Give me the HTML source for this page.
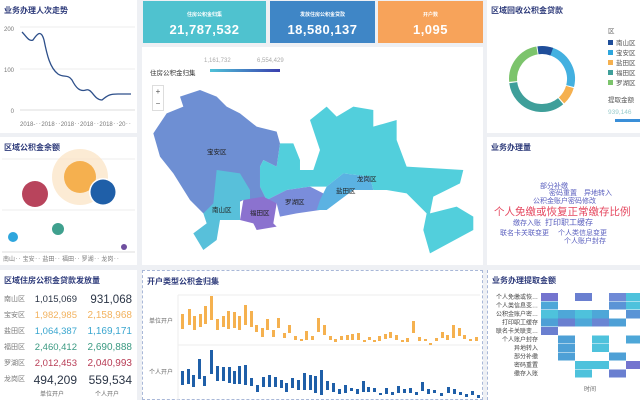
<!DOCTYPE html>
<html><head><meta charset="utf-8"><style>
*{margin:0;padding:0;box-sizing:border-box}
body{width:640px;height:400px;overflow:hidden;background:#eef0f4;font-family:"Liberation Sans","Noto Sans CJK SC",sans-serif;position:relative}
.p{position:absolute;background:#fff}
.t{position:absolute;left:4px;top:5px;font-size:8px;font-weight:bold;color:#2d3a7a}
.k{position:absolute;color:#fff;text-align:center}
.k .a{font-size:5px;margin-top:10px;font-weight:bold}
.k .b{font-size:13px;font-weight:bold;letter-spacing:.5px;margin-top:4px}
.s{position:absolute;font-size:6px;color:#666}
</style></head><body>
<div class="p" style="left:0;top:0;width:137px;height:133px"><div class="t">业务办理人次走势</div>
<svg width="137" height="133" style="position:absolute;left:0;top:0">
<line x1="20" y1="27" x2="135" y2="27" stroke="#eee"/><line x1="20" y1="69" x2="135" y2="69" stroke="#eee"/><line x1="20" y1="110" x2="135" y2="110" stroke="#ddd"/>
<text x="14" y="31" font-size="6" fill="#777" text-anchor="end">200</text><text x="14" y="72" font-size="6" fill="#777" text-anchor="end">100</text><text x="14" y="113" font-size="6" fill="#777" text-anchor="end">0</text>
<path d="M22 32 C26 36,29 42,33 40 C37 34,41 29,44 40 C47 55,50 68,58 74 C64 78,68 74,72 80 C76 88,80 92,86 90 C92 88,94 100,102 100 C108 95,110 94,118 94 L131 94" fill="none" stroke="#2d4f8a" stroke-width="1.3"/>
<text x="20" y="126" font-size="6" fill="#777">2018-‥2018‥2018‥2018‥2018‥20‥</text></svg></div>
<div class="p" style="left:0;top:137px;width:137px;height:128px"><div class="t">区域公积金余额</div>
<svg width="137" height="128" style="position:absolute;left:0;top:0">
<line x1="2" y1="22" x2="135" y2="22" stroke="#eee"/><line x1="2" y1="73" x2="135" y2="73" stroke="#eee"/><line x1="2" y1="115" x2="135" y2="115" stroke="#ddd"/>
<circle cx="80" cy="40" r="28" fill="#fbe3c2" opacity=".7"/><circle cx="80" cy="40" r="16" fill="#f5b04f"/>
<circle cx="35" cy="57" r="13" fill="#b8445c"/><circle cx="103" cy="55" r="14" fill="#fff"/><circle cx="103" cy="55" r="12.5" fill="#1f5fa8"/>
<circle cx="13" cy="100" r="5" fill="#2ea6dd"/><circle cx="58" cy="92" r="6" fill="#3fa08e"/><circle cx="124" cy="110" r="3" fill="#6f4f9f"/>
<text x="3" y="124" font-size="6" fill="#777">南山‥ 宝安‥ 盐田‥ 福田‥ 罗湖‥ 龙岗‥</text></svg></div>
<div class="p" style="left:0;top:270px;width:137px;height:130px"><div class="t">区域住房公积金贷款发放量</div>
<div style="position:absolute;left:4px;top:22px;font-size:7px;line-height:16px;color:#777">南山区<br>宝安区<br>盐田区<br>福田区<br>罗湖区<br>龙岗区</div>
<div style="position:absolute;right:60px;top:22px;text-align:right;line-height:16px;font-size:9.5px"><div style="color:#2b3546">1,015,069</div><div style="color:#f2b25e">1,982,985</div><div style="color:#3aa6cf">1,064,387</div><div style="color:#3b9a82">2,460,412</div><div style="color:#b83d56">2,012,453</div><div style="color:#2b3546;font-size:12px">494,209</div></div>
<div style="position:absolute;right:5px;top:22px;text-align:right;line-height:16px;font-size:10px"><div style="color:#2b3546;font-size:11.5px">931,068</div><div style="color:#f2b25e">2,158,968</div><div style="color:#3aa6cf">1,169,171</div><div style="color:#3b9a82">2,690,888</div><div style="color:#b83d56">2,040,993</div><div style="color:#2b3546;font-size:12px">559,534</div></div>
<div class="s" style="left:40px;top:119px">单位开户</div><div class="s" style="left:95px;top:119px">个人开户</div></div>
<div class="k" style="left:143px;top:1px;width:123px;height:42px;background:#4fc2cf"><div class="a">住房公积金归集</div><div class="b">21,787,532</div></div>
<div class="k" style="left:270px;top:1px;width:105px;height:42px;background:#3f86c6"><div class="a">发放住房公积金贷款</div><div class="b">18,580,137</div></div>
<div class="k" style="left:378px;top:1px;width:105px;height:42px;background:#f7a35a"><div class="a">开户数</div><div class="b">1,095</div></div>
<div class="p" style="left:142px;top:47px;width:341px;height:218px">
<div class="s" style="left:8px;top:20px;font-size:6.5px;color:#333">住房公积金归集</div>
<div class="s" style="left:62px;top:11px;color:#aaa">1,161,732</div><div class="s" style="left:115px;top:11px;color:#aaa">6,554,429</div>
<div style="position:absolute;left:68px;top:22px;width:70px;height:3px;background:linear-gradient(90deg,#4fc2d8,#3a3fae)"></div>
<div style="position:absolute;left:10px;top:38px;width:12px;height:26px;border:1px solid #ddd;font-size:8px;color:#555;text-align:center;line-height:12px;background:#fff">+<br>−</div>
</div>
<svg width="640" height="400" style="position:absolute;left:0;top:0">
<g transform="translate(140,90) scale(0.3333)">
<path d="M360 230 L370 210 L410 230 L420 160 L460 160 L480 210 L480 240 L520 240 L540 180 L510 90 L560 50 L590 80 L640 50 L700 60 L700 110 L770 90 L770 150 L800 230 L970 240 L960 280 L880 320 L870 370 L950 350 L1000 380 L1000 420 L870 490 L850 420 L860 370 L800 310 L740 300 L700 300 L690 260 L610 250 L560 290 L510 290 L440 300 L380 330 L360 290Z" fill="#52cfdc"/>
<path d="M40 130 L80 70 L130 50 L120 20 L180 0 L230 20 L260 50 L300 70 L350 110 L410 125 L420 160 L410 230 L370 210 L360 230 L360 290 L380 330 L310 330 L250 360 L190 370 L150 330 L100 250 L60 200Z" fill="#6e8fd3"/>
<path d="M230 240 L300 250 L330 300 L330 330 L300 330 L300 390 L240 390 L230 450 L190 480 L160 430 L200 400 L190 370 L220 340Z" fill="#58c0da"/>
<path d="M380 330 L440 300 L510 290 L550 310 L550 330 L540 360 L470 370 L420 380 L410 340Z" fill="#7a8ddb"/>
<path d="M560 290 L610 250 L690 260 L700 300 L640 300 L600 330 L560 360 L530 360 L540 330Z" fill="#5bb2e2"/>
<path d="M310 330 L370 320 L410 340 L400 400 L410 410 L350 420 L340 400 L300 390Z" fill="#8b72cf"/>
</g>
<g font-size="6.5" fill="#222"><text x="207" y="154">宝安区</text><text x="212" y="212">南山区</text><text x="250" y="215">福田区</text><text x="285" y="204">罗湖区</text><text x="336" y="193">盐田区</text><text x="357" y="181">龙岗区</text></g>
</svg>
<div class="p" style="left:142px;top:270px;width:341px;height:130px;border:1px dashed #a9b8d8"><div class="t">开户类型公积金归集</div>
<div class="s" style="left:6px;top:45px">单位开户</div><div class="s" style="left:6px;top:96px">个人开户</div></div>
<svg width="640" height="400" style="position:absolute;left:0;top:0">
<line x1="178" y1="295" x2="480" y2="295" stroke="#eee"/><line x1="178" y1="345" x2="480" y2="345" stroke="#eee"/><line x1="178" y1="295" x2="178" y2="400" stroke="#eee"/>
<g fill="#f5b14f">
<rect x="181" y="314" width="3" height="15"/><rect x="188" y="309" width="3" height="16"/><rect x="193" y="316" width="3" height="14"/><rect x="199" y="314" width="3" height="13"/><rect x="204" y="306" width="3" height="18"/><rect x="210" y="296" width="3" height="24"/><rect x="216" y="319" width="3" height="11"/><rect x="222" y="316" width="3" height="11"/><rect x="227" y="311" width="3" height="18"/><rect x="233" y="312" width="3" height="16"/><rect x="238" y="316" width="3" height="14"/><rect x="244" y="305" width="3" height="20"/><rect x="250" y="311" width="3" height="16"/><rect x="255" y="325" width="3" height="7"/><rect x="261" y="328" width="3" height="9"/><rect x="266" y="319" width="3" height="11"/><rect x="272" y="330" width="3" height="7"/><rect x="277" y="318" width="3" height="10"/><rect x="283" y="333" width="3" height="5"/><rect x="288" y="325" width="3" height="8"/><rect x="294" y="336" width="3" height="4"/><rect x="300" y="339" width="3" height="2"/><rect x="305" y="331" width="3" height="9"/><rect x="311" y="336" width="3" height="4"/><rect x="317" y="318" width="3" height="14"/><rect x="323" y="325" width="3" height="10"/><rect x="329" y="336" width="3" height="4"/><rect x="334" y="339" width="3" height="3"/><rect x="340" y="336" width="3" height="4"/><rect x="346" y="335" width="3" height="5"/><rect x="351" y="334" width="3" height="6"/><rect x="357" y="333" width="3" height="7"/><rect x="363" y="340" width="3" height="2"/><rect x="368" y="337" width="3" height="3"/><rect x="373" y="340" width="3" height="2"/><rect x="378" y="336" width="3" height="5"/><rect x="384" y="334" width="3" height="5"/><rect x="389" y="332" width="3" height="6"/><rect x="395" y="335" width="3" height="5"/><rect x="401" y="340" width="3" height="2"/><rect x="406" y="338" width="3" height="4"/><rect x="412" y="321" width="3" height="12"/><rect x="418" y="337" width="3" height="4"/><rect x="424" y="339" width="3" height="2"/><rect x="429" y="343" width="3" height="2"/><rect x="435" y="338" width="3" height="3"/><rect x="441" y="332" width="3" height="6"/><rect x="446" y="335" width="3" height="5"/><rect x="452" y="325" width="3" height="13"/><rect x="458" y="328" width="3" height="8"/><rect x="463" y="335" width="3" height="4"/><rect x="469" y="339" width="3" height="2"/><rect x="475" y="337" width="3" height="4"/></g>
<g fill="#1f5fa8">
<rect x="181" y="371" width="3" height="14"/><rect x="187" y="369" width="3" height="15"/><rect x="192" y="375" width="3" height="12"/><rect x="198" y="359" width="3" height="20"/><rect x="203" y="376" width="3" height="10"/><rect x="210" y="350" width="3" height="24"/><rect x="216" y="366" width="3" height="15"/><rect x="222" y="367" width="3" height="14"/><rect x="228" y="367" width="3" height="16"/><rect x="233" y="371" width="3" height="13"/><rect x="238" y="366" width="3" height="18"/><rect x="244" y="365" width="3" height="20"/><rect x="250" y="378" width="3" height="8"/><rect x="256" y="385" width="3" height="7"/><rect x="262" y="377" width="3" height="10"/><rect x="268" y="375" width="3" height="12"/><rect x="274" y="377" width="3" height="10"/><rect x="280" y="380" width="3" height="8"/><rect x="285" y="383" width="3" height="9"/><rect x="291" y="378" width="3" height="10"/><rect x="297" y="380" width="3" height="10"/><rect x="303" y="373" width="3" height="17"/><rect x="309" y="375" width="3" height="15"/><rect x="314" y="376" width="3" height="17"/><rect x="320" y="370" width="3" height="25"/><rect x="326" y="381" width="3" height="9"/><rect x="332" y="383" width="3" height="9"/><rect x="338" y="389" width="3" height="5"/><rect x="344" y="385" width="3" height="8"/><rect x="350" y="388" width="3" height="3"/><rect x="356" y="389" width="3" height="5"/><rect x="362" y="381" width="3" height="11"/><rect x="367" y="387" width="3" height="5"/><rect x="373" y="388" width="3" height="4"/><rect x="379" y="393" width="3" height="2"/><rect x="385" y="388" width="3" height="6"/><rect x="391" y="392" width="3" height="3"/><rect x="397" y="386" width="3" height="7"/><rect x="403" y="389" width="3" height="4"/><rect x="409" y="388" width="3" height="5"/><rect x="415" y="392" width="3" height="3"/><rect x="421" y="382" width="3" height="9"/><rect x="427" y="389" width="3" height="5"/><rect x="433" y="390" width="3" height="3"/><rect x="440" y="393" width="3" height="3"/><rect x="447" y="387" width="3" height="6"/><rect x="453" y="389" width="3" height="5"/><rect x="459" y="392" width="3" height="3"/><rect x="465" y="394" width="3" height="3"/><rect x="471" y="391" width="3" height="4"/><rect x="477" y="395" width="3" height="3"/></g></svg>
<div class="p" style="left:487px;top:0;width:153px;height:133px"><div class="t">区域回收公积金贷款</div>
<svg width="153" height="133" style="position:absolute;left:0;top:0">
<g fill="none" stroke-width="8">
<circle cx="55" cy="79" r="29" stroke="#43b0e0" stroke-dasharray="45 200" transform="rotate(-75 55 79)"/>
<circle cx="55" cy="79" r="29" stroke="#f5b04f" stroke-dasharray="16 200" transform="rotate(16 55 79)"/>
<circle cx="55" cy="79" r="29" stroke="#3f9f9a" stroke-dasharray="62 200" transform="rotate(50 55 79)"/>
<circle cx="55" cy="79" r="29" stroke="#7cc46c" stroke-dasharray="43 200" transform="rotate(175 55 79)"/>
<circle cx="55" cy="79" r="29" stroke="#1f4e9a" stroke-dasharray="14 200" transform="rotate(262 55 79)"/>
</g>
<text x="121" y="33" font-size="6.5" fill="#666">区</text>
<g font-size="6.5" fill="#555"><rect x="121" y="40" width="5" height="5" fill="#1f4e9a"/><text x="129" y="45">南山区</text><rect x="121" y="50" width="5" height="5" fill="#2ea6dd"/><text x="129" y="55">宝安区</text><rect x="121" y="60" width="5" height="5" fill="#f5b04f"/><text x="129" y="65">盐田区</text><rect x="121" y="70" width="5" height="5" fill="#3f9f9a"/><text x="129" y="75">福田区</text><rect x="121" y="80" width="5" height="5" fill="#7cc46c"/><text x="129" y="85">罗湖区</text>
<text x="121" y="102">提取金额</text><text x="121" y="114" fill="#9cc">939,146</text></g>
<rect x="128" y="119" width="25" height="3" fill="#3a8fd8"/></svg></div>
<div class="p" style="left:487px;top:137px;width:153px;height:128px"><div class="t">业务办理量</div>
<div style="position:absolute;left:0;top:0;width:153px;height:128px;font-size:7px;color:#5a5fbf">
<span style="position:absolute;left:53px;top:44px">部分补缴</span>
<span style="position:absolute;left:62px;top:51px">密码重置</span><span style="position:absolute;left:97px;top:51px">异地转入</span>
<span style="position:absolute;left:46px;top:59px">公积金账户密码修改</span>
<span style="position:absolute;left:7px;top:67px;font-size:10.5px;color:#e5475f">个人免缴或恢复正常缴存比例</span>
<span style="position:absolute;left:26px;top:81px">缴存入账</span><span style="position:absolute;left:58px;top:80px;font-size:8px">打印职工缓存</span>
<span style="position:absolute;left:13px;top:91px">联名卡关联变更</span><span style="position:absolute;left:71px;top:91px">个人类信息变更</span>
<span style="position:absolute;left:77px;top:99px">个人账户封存</span></div></div>
<div class="p" style="left:487px;top:270px;width:153px;height:130px;border-left:1px dashed #a9b8d8"><div class="t">业务办理提取金额</div></div>
<svg width="640" height="400" style="position:absolute;left:0;top:0">
<g font-size="6" fill="#444" text-anchor="end"><text x="538" y="299">个人免缴或恢…</text><text x="538" y="307.5">个人类信息变…</text><text x="538" y="316">公积金账户密…</text><text x="538" y="324.5">打印职工缓存</text><text x="538" y="333">联名卡关联变…</text><text x="538" y="341.5">个人账户封存</text><text x="538" y="350">异地转入</text><text x="538" y="358.5">部分补缴</text><text x="538" y="367">密码重置</text><text x="538" y="375.5">缴存入账</text></g>
<g>
<rect x="541" y="293" width="17" height="8" fill="#7474cf"/><rect x="575" y="293" width="17" height="8" fill="#6a7fd0"/><rect x="609" y="293" width="17" height="8" fill="#6f8ad6"/><rect x="626" y="293" width="14" height="8" fill="#4ec2dc"/>
<rect x="541" y="301.5" width="17" height="8" fill="#4ea7d8"/><rect x="609" y="301.5" width="17" height="8" fill="#5a94d6"/><rect x="626" y="301.5" width="14" height="8" fill="#4ec2dc"/>
<rect x="541" y="310" width="17" height="8.5" fill="#4ec2dc"/><rect x="558" y="310" width="17" height="8.5" fill="#4ea7d8"/><rect x="575" y="310" width="17" height="8.5" fill="#4ec2dc"/><rect x="592" y="310" width="17" height="8.5" fill="#4ea7d8"/><rect x="626" y="310" width="14" height="8.5" fill="#5a94d6"/>
<rect x="541" y="318.5" width="17" height="8" fill="#4ea0d6"/><rect x="558" y="318.5" width="17" height="8" fill="#6a7fd0"/><rect x="575" y="318.5" width="17" height="8" fill="#4ea7d8"/><rect x="592" y="318.5" width="17" height="8" fill="#6a85d3"/><rect x="609" y="318.5" width="17" height="8" fill="#4ea0d6"/>
<rect x="541" y="327" width="17" height="8" fill="#6a7fd0"/>
<rect x="558" y="335.5" width="17" height="8" fill="#4ea0d6"/><rect x="592" y="335.5" width="17" height="8" fill="#4ec2dc"/><rect x="626" y="335.5" width="14" height="8" fill="#4ea7d8"/>
<rect x="558" y="344" width="17" height="8" fill="#4ea0d6"/><rect x="592" y="344" width="17" height="8" fill="#4ec2dc"/>
<rect x="558" y="352.5" width="17" height="8" fill="#4ea0d6"/><rect x="609" y="352.5" width="17" height="8" fill="#4ea0d6"/>
<rect x="575" y="361" width="34" height="8" fill="#4ec2dc"/><rect x="626" y="361" width="14" height="8" fill="#7474cf"/>
<rect x="575" y="369.5" width="17" height="8" fill="#4ec2dc"/><rect x="609" y="369.5" width="17" height="8" fill="#6a7fd0"/>
</g>
<text x="584" y="391" font-size="6" fill="#666">时间</text></svg>
</body></html>
